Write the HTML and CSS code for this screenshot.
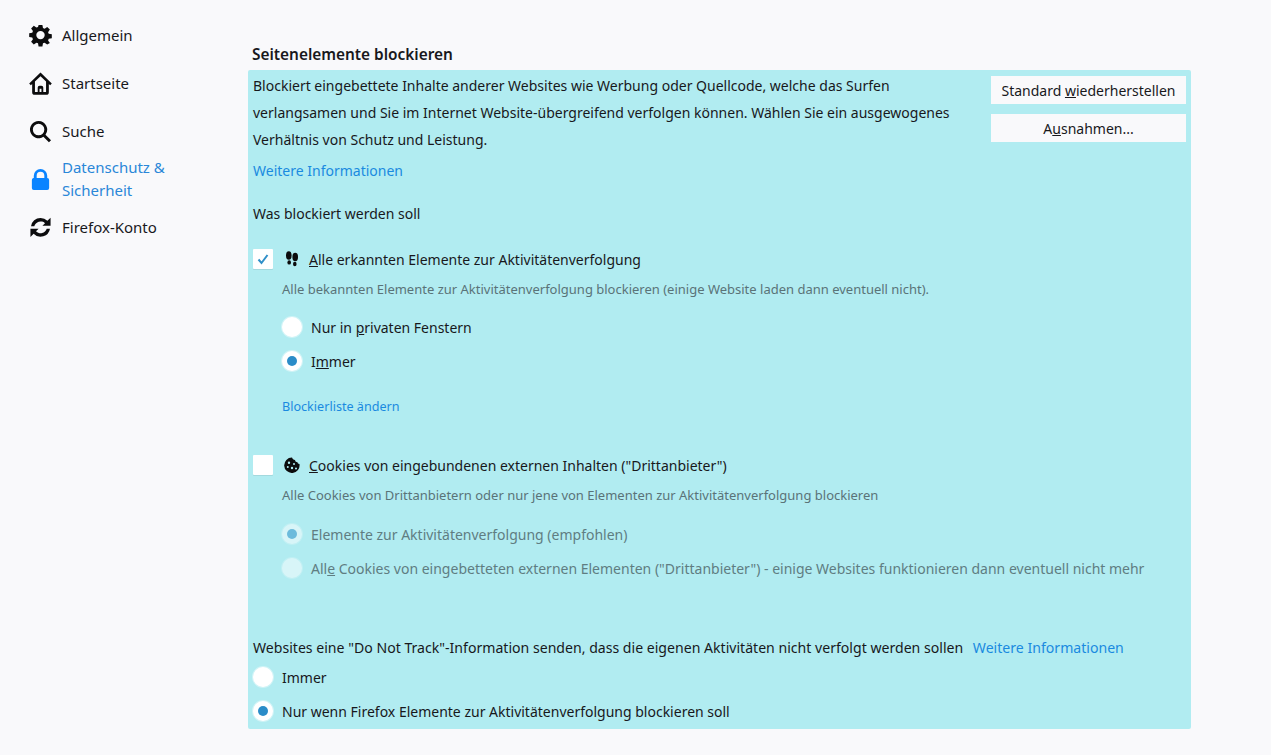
FILE: index.html
```html
<!DOCTYPE html>
<html lang="de">
<head>
    <meta charset="UTF-8">
    <title>Einstellungen</title>
    <link rel="stylesheet" href="styles.css">
</head>
<body>
    <nav class="sidebar">
        <div class="nav-item">
            <svg class="nav-icon" viewBox="0 0 24 24"><path fill-rule="evenodd" d="M10 1h4l.6 3.2 1.7.7L19 3l2.8 2.8-1.900 2.700.7 1.700 3.200.6v4l-3.200.6-.7 1.700 1.900 2.700L19 21.400l-2.700-1.900-1.700.7L14 23.400h-4l-.6-3.200-1.700-.7L5 21.400 2.200 18.600l1.900-2.700-.7-1.700L.2 13.600v-4l3.200-.6.7-1.700L2.200 4.600 5 1.800l2.700 1.900 1.700-.7zM12 7.200a4.400 4.400 0 1 0 0 8.800 4.400 4.400 0 0 0 0-8.800z"/></svg>
            <span>Allgemein</span>
        </div>
        <div class="nav-item">
            <svg class="nav-icon" viewBox="0 0 24 24"><path fill-rule="evenodd" d="M12 .6 .2 12l1.700 1.800 1.400-1.300V21a2.700 2.700 0 0 0 2.700 2.700h12a2.700 2.700 0 0 0 2.700-2.700v-8.500l1.400 1.300L23.800 12zM6.200 20.800V10l5.800-5.500 5.800 5.500v10.800h-2.900v-4.500a2 2 0 0 0-2-2h-1.800a2 2 0 0 0-2 2v4.500zM11 17.500h2v3.300h-2z"/></svg>
            <span>Startseite</span>
        </div>
        <div class="nav-item">
            <svg class="nav-icon" viewBox="0 0 24 24"><path fill-rule="evenodd" d="M10 1a9 9 0 1 0 5 16.500l5.800 5.800 2.200-2.200-5.800-5.800A9 9 0 0 0 10 1zm0 3a6 6 0 1 1 0 12 6 6 0 0 1 0-12z"/></svg>
            <span>Suche</span>
        </div>
        <div class="nav-item nav-active">
            <svg class="nav-icon" viewBox="0 0 24 24"><path fill-rule="evenodd" d="M12 2a7 7 0 0 0-7 7v2.500H4.500A2 2 0 0 0 3 13.500V22a2 2 0 0 0 2 2h14a2 2 0 0 0 2-2v-8.500a2 2 0 0 0-2-2V9a7 7 0 0 0-7-7zm0 3a4 4 0 0 1 4 4v2.500H8V9a4 4 0 0 1 4-4z"/></svg>
            <span>Datenschutz &amp;<br>Sicherheit</span>
        </div>
        <div class="nav-item">
            <svg class="nav-icon" viewBox="0 0 24 24"><path d="M12 2a10 10 0 0 0-9.900 8.700h3.400A6.800 6.800 0 0 1 16.700 7.500L14 10.200h8.500V1.700l-3.300 3.300A10 10 0 0 0 12 2zM1.500 13.300v8.500l3.300-3.300a10 10 0 0 0 17.100-5.200h-3.400A6.800 6.800 0 0 1 7.300 16L10 13.300z"/></svg>
            <span>Firefox-Konto</span>
        </div>
    </nav>

    <main class="content">
        <h2>Seitenelemente blockieren</h2>
        <section class="panel">
            <div class="intro">
                <div class="intro-text">
                    <p>Blockiert eingebettete Inhalte anderer Websites wie Werbung oder Quellcode, welche das Surfen verlangsamen und Sie im Internet Website-übergreifend verfolgen können. Wählen Sie ein ausgewogenes Verhältnis von Schutz und Leistung.</p>
                    <a class="link more">Weitere Informationen</a>
                </div>
                <div class="buttons">
                    <button>Standard <u>w</u>iederherstellen</button>
                    <button>A<u>u</u>snahmen...</button>
                </div>
            </div>

            <div class="what">Was blockiert werden soll</div>

            <div class="check-row">
                <span class="checkbox">
                    <svg viewBox="0 0 12 12"><path d="M1.500 6.500 4.500 10 10.500 2" fill="none" stroke="#2f8fc8" stroke-width="2"/></svg>
                </span>
                <svg class="row-icon" viewBox="0 0 16 16"><ellipse cx="4.800" cy="4.500" rx="2.800" ry="4.300"/><ellipse cx="11.200" cy="6" rx="2.800" ry="4.300"/><ellipse cx="5.200" cy="11.400" rx="1.800" ry="2.200"/><ellipse cx="10.800" cy="13" rx="1.800" ry="2.200"/></svg>
                <span><u>A</u>lle erkannten Elemente zur Aktivitätenverfolgung</span>
            </div>
            <div class="desc">Alle bekannten Elemente zur Aktivitätenverfolgung blockieren (einige Website laden dann eventuell nicht).</div>
            <div class="radio-group">
                <div class="radio-row"><span class="radio"></span><span>Nur in <u>p</u>rivaten Fenstern</span></div>
                <div class="radio-row"><span class="radio selected"></span><span>I<u>m</u>mer</span></div>
            </div>
            <a class="link small">Blockierliste ändern</a>

            <div class="check-row second">
                <span class="checkbox"></span>
                <svg class="row-icon" viewBox="0 0 16 16"><path fill-rule="evenodd" d="M8 .6c.5 1.500 1.500 2.300 3 2.400.2 1.500 1.200 2.200 2.500 2.200.1 1 .8 1.600 2 1.900A7.700 7.700 0 1 1 8 .6zM5 4.600a1.200 1.200 0 1 0 0 2.400 1.200 1.200 0 0 0 0-2.400zm5 1.500a1 1 0 1 0 0 2 1 1 0 0 0 0-2zM3.800 9a1 1 0 1 0 0 2 1 1 0 0 0 0-2zm4.200.8a1.200 1.200 0 1 0 0 2.400 1.200 1.200 0 0 0 0-2.400zm4 .6a1 1 0 1 0 0 2 1 1 0 0 0 0-2z"/></svg>
                <span><u>C</u>ookies von eingebundenen externen Inhalten ("Drittanbieter")</span>
            </div>
            <div class="desc">Alle Cookies von Drittanbietern oder nur jene von Elementen zur Aktivitätenverfolgung blockieren</div>
            <div class="radio-group disabled">
                <div class="radio-row"><span class="radio selected"></span><span>Elemente zur Aktivitätenverfolgung (empfohlen)</span></div>
                <div class="radio-row"><span class="radio"></span><span>All<u>e</u> Cookies von eingebetteten externen Elementen ("Drittanbieter") - einige Websites funktionieren dann eventuell nicht mehr</span></div>
            </div>

            <div class="dnt">Websites eine "Do Not Track"-Information senden, dass die eigenen Aktivitäten nicht verfolgt werden sollen <a class="link">Weitere Informationen</a></div>
            <div class="radio-group dnt-group">
                <div class="radio-row"><span class="radio"></span><span>Immer</span></div>
                <div class="radio-row"><span class="radio selected"></span><span>Nur wenn Firefox Elemente zur Aktivitätenverfolgung blockieren soll</span></div>
            </div>
        </section>
    </main>
</body>
</html>
```

FILE: styles.css
```css
body {
    margin: 0;
    height: 755px;
    overflow: hidden;
    display: flex;
    background-color: #f9f9fb;
    color: #18181c;
    font-family: "Noto Sans", "Open Sans", sans-serif;
    font-size: 14px;
}

/* Sidebar */
.sidebar {
    width: 248px;
    flex-shrink: 0;
    padding: 11px 0 0 29px;
    box-sizing: border-box;
}

.nav-item {
    display: flex;
    align-items: center;
    gap: 10px;
    height: 48px;
    font-size: 15px;
}

.nav-icon {
    width: 23px;
    height: 23px;
    flex-shrink: 0;
    fill: #0c0c0d;
}

.nav-active {
    height: 49px;
    margin-top: -1px;
    line-height: 23px;
    color: #2a87d8;
}

.nav-active .nav-icon {
    fill: #0a84ff;
}

/* Main column */
.content {
    width: 943px;
}

h2 {
    margin: 45px 0 5px 4px;
    height: 20px;
    line-height: 20px;
    font-size: 15.400px;
    font-weight: 600;
}

.panel {
    height: 659px;
    box-sizing: border-box;
    padding: 2px 5px 0;
    background-color: #b1ecf1;
    border-radius: 2px;
}

.intro {
    display: flex;
    justify-content: space-between;
    height: 114px;
}

.intro-text {
    width: 712px;
}

.intro-text p {
    margin: 0;
    line-height: 27px;
}

.more {
    display: block;
    margin-top: 6px;
    line-height: 23px;
}

.link {
    color: #1a8ae0;
}

.link.small {
    display: block;
    margin: 25px 0 0 29px;
    font-size: 12.600px;
    line-height: 20px;
}

.buttons {
    display: flex;
    flex-direction: column;
    gap: 10px;
    margin: 4px 0 0;
}

button {
    width: 195px;
    height: 28px;
    padding: 0;
    border: none;
    background-color: #f9f9fb;
    color: #18181c;
    font-family: inherit;
    font-size: 14px;
}

.what {
    margin-top: 18px;
    line-height: 20px;
}

.check-row {
    display: flex;
    align-items: center;
    height: 22px;
    margin-top: 24px;
}

.check-row.second {
    margin-top: 37px;
}

.checkbox {
    width: 20px;
    height: 20px;
    background-color: #fff;
    border-radius: 1px;
    box-shadow: 0 1px 0 rgba(0, 0, 0, 0.08);
    display: flex;
    align-items: center;
    justify-content: center;
    margin-right: 11px;
}

.checkbox svg {
    width: 12px;
    height: 12px;
}

.row-icon {
    width: 16px;
    height: 16px;
    margin-right: 9px;
    fill: #0c0c0d;
}

.desc {
    margin: 9px 0 0 29px;
    font-size: 13px;
    line-height: 20px;
    color: #5a7378;
}

.radio-group {
    margin: 17px 0 0 29px;
    display: flex;
    flex-direction: column;
    gap: 12px;
}

.radio-row {
    display: flex;
    align-items: center;
    gap: 9px;
    height: 22px;
}

.radio {
    width: 20px;
    height: 20px;
    border-radius: 50%;
    background-color: #fff;
    box-shadow: 0 0 0 1px rgba(255, 255, 255, 0.4);
    display: flex;
    align-items: center;
    justify-content: center;
}

.radio.selected::after {
    content: "";
    width: 10px;
    height: 10px;
    border-radius: 50%;
    background-color: #2a8cc8;
}

.radio-group.disabled {
    margin-top: 18px;
    color: #5f7d82;
}

.radio-group.disabled .radio {
    opacity: 0.5;
}

.dnt {
    margin-top: 58px;
    line-height: 22px;
    font-size: 14.100px;
}

.dnt .link {
    margin-left: 6px;
}

.radio-group.dnt-group {
    margin: 7px 0 0 0;
}
```
